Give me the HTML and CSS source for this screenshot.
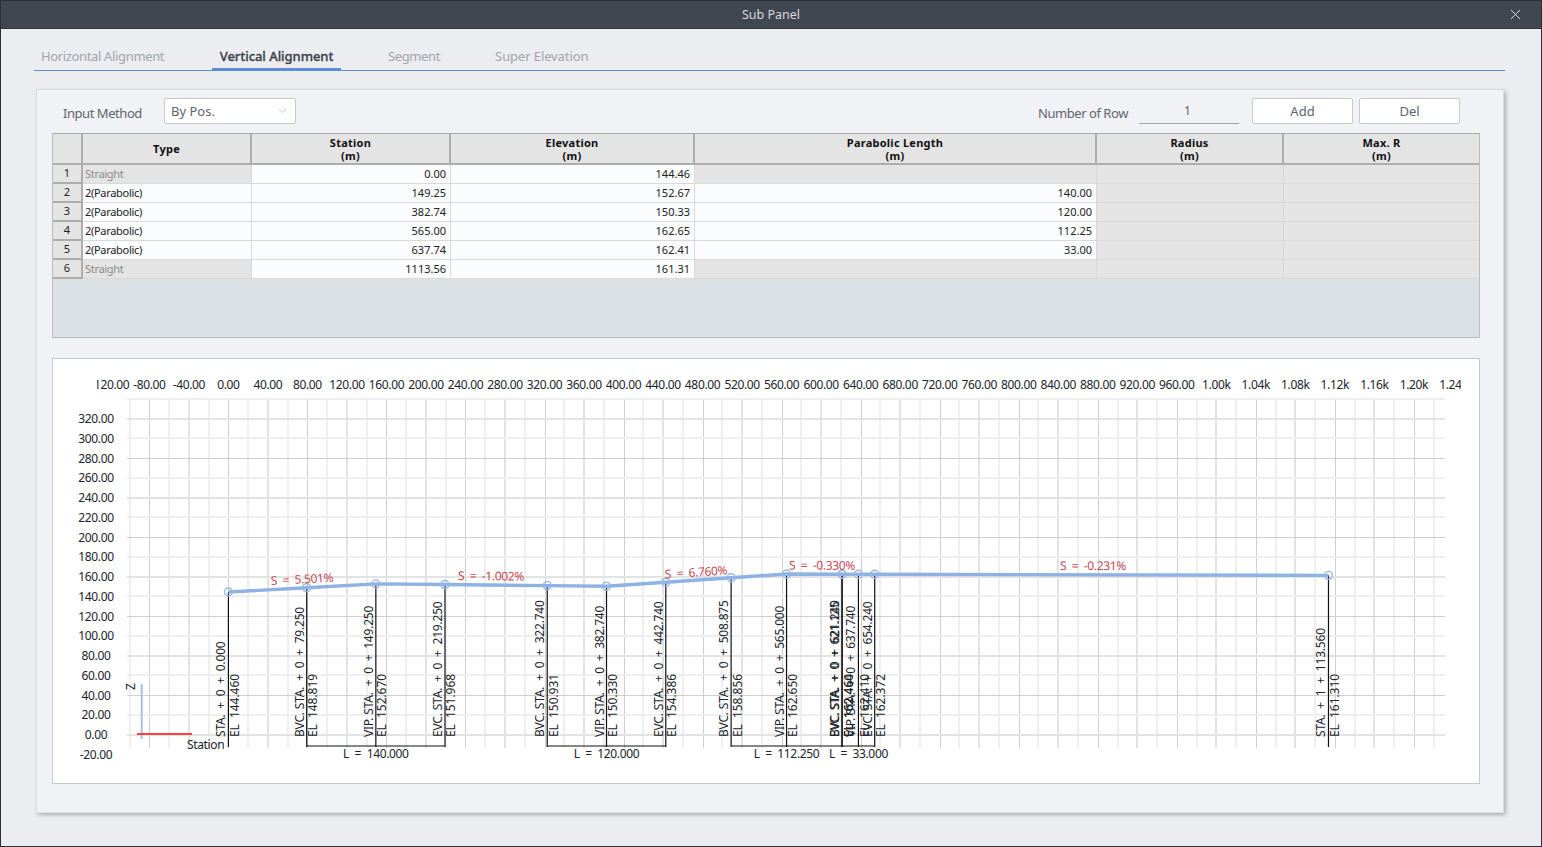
FILE: index.html
```html
<!DOCTYPE html>
<html lang="en">
<head>
<meta charset="UTF-8" />
<meta name="viewport" content="width=device-width, initial-scale=1" />
<title>Sub Panel</title>
<link rel="stylesheet" href="styles.css">
</head>
<body>

<div class="window">
  <div class="titlebar">
    <span>Sub Panel</span>
    <svg class="close" width="11" height="11" viewBox="0 0 11 11"><path d="M1 1l9 9M10 1l-9 9" /></svg>
  </div>

  <div class="tabs">
    <div class="tab">Horizontal Alignment</div>
    <div class="tab active">Vertical Alignment</div>
    <div class="tab">Segment</div>
    <div class="tab">Super Elevation</div>
  </div>

  <div class="card">
    <div class="toolbar">
      <label class="input-label">Input Method</label>
      <div class="select">
        <span>By Pos.</span>
        <svg width="9" height="6" viewBox="0 0 9 6"><path d="M1 1l3.5 3.5L8 1" /></svg>
      </div>
      <div class="toolbar-right">
        <label class="row-label">Number of Row</label>
        <div class="row-input">1</div>
        <button class="add">Add</button>
        <button>Del</button>
      </div>
    </div>

    <div class="grid">
      <table>
        <colgroup>
          <col class="c-num"><col class="c-type"><col class="c-sta"><col class="c-el">
          <col class="c-len"><col class="c-rad"><col class="c-max">
        </colgroup>
        <thead>
          <tr>
            <th></th>
            <th>Type</th>
            <th>Station<br>(m)</th>
            <th>Elevation<br>(m)</th>
            <th>Parabolic Length<br>(m)</th>
            <th>Radius<br>(m)</th>
            <th>Max. R<br>(m)</th>
          </tr>
        </thead>
        <tbody>
          <tr><td class="num">1</td><td class="type off">Straight</td><td>0.00</td><td>144.46</td><td class="off"></td><td class="off"></td><td class="off"></td></tr>
          <tr><td class="num">2</td><td class="type">2(Parabolic)</td><td>149.25</td><td>152.67</td><td>140.00</td><td class="off"></td><td class="off"></td></tr>
          <tr><td class="num">3</td><td class="type">2(Parabolic)</td><td>382.74</td><td>150.33</td><td>120.00</td><td class="off"></td><td class="off"></td></tr>
          <tr><td class="num">4</td><td class="type">2(Parabolic)</td><td>565.00</td><td>162.65</td><td>112.25</td><td class="off"></td><td class="off"></td></tr>
          <tr><td class="num">5</td><td class="type">2(Parabolic)</td><td>637.74</td><td>162.41</td><td>33.00</td><td class="off"></td><td class="off"></td></tr>
          <tr><td class="num">6</td><td class="type off">Straight</td><td>1113.56</td><td>161.31</td><td class="off"></td><td class="off"></td><td class="off"></td></tr>
        </tbody>
      </table>
    </div>

    <div class="chart">
      <svg id="chart" width="1426" height="424" viewBox="53 359 1426 424"></svg>
    </div>
  </div>
</div>

<script src="chart.js"></script>
</body>
</html>
```

FILE: styles.css
```css
* {
  box-sizing: border-box;
}
body {
  margin: 0;
  font-family: "Noto Sans", sans-serif;
  background: #ebedf0;
}
.window {
  width: 1542px;
  height: 847px;
  border: 1px solid #2b3036;
  background: #ebedf0;
  overflow: hidden;
}
.titlebar {
  height: 29px;
  margin: -1px -1px 0;
  background: #414751;
  border-bottom: 1px solid #2f343b;
  color: #d5d8dc;
  font-size: 12.5px;
  display: flex;
  align-items: center;
  justify-content: center;
  position: relative;
}
.close {
  position: absolute;
  right: 21px;
  top: 9px;
}
.close path {
  stroke: #d5d8dc;
  stroke-width: 1;
  fill: none;
}
.tabs {
  display: flex;
  gap: 41px;
  height: 26px;
  margin: 16px 36px 0 33px;
  border-bottom: 1px solid #5b8fd0;
}
.tab {
  padding: 0 7px;
  height: 26px;
  line-height: 22px;
  font-size: 13px;
  letter-spacing: -0.35px;
  color: #a2a5aa;
  white-space: nowrap;
}
.tab:last-child {
  letter-spacing: -0.1px;
}
.tab.active {
  padding: 0 7.5px;
  margin-right: -1px;
  color: #3d434b;
  font-weight: 500;
  letter-spacing: -0.05px;
  border-bottom: 3px solid #5b8fd0;
  -webkit-text-stroke: 0.3px #3d434b;
}
.card {
  width: 1468px;
  height: 724px;
  margin: 18px 0 0 35px;
  padding: 8px 23px 0 15px;
  background: #f0f2f6;
  border: 1px solid #d9dce1;
  box-shadow: 2px 2px 4px rgba(0, 0, 0, 0.25);
}
.toolbar {
  display: flex;
  height: 26px;
  margin-bottom: 9px;
  font-size: 13px;
  color: #5e646c;
}
.input-label {
  margin-left: 11px;
  width: 90px;
  padding-top: 6px;
  white-space: nowrap;
  letter-spacing: -0.45px;
}
.select {
  margin-left: 11px;
  width: 132px;
  height: 26px;
  padding: 0 8px 0 6px;
  background: #fff;
  border: 1px solid #c9c9c9;
  border-radius: 2px;
  display: flex;
  align-items: center;
  justify-content: space-between;
  color: #5e646c;
}
.select path {
  stroke: #d0d0d0;
  fill: none;
}
.toolbar-right {
  margin-left: auto;
  margin-right: 20px;
  display: flex;
}
.row-label {
  width: 101px;
  padding-top: 6px;
  white-space: nowrap;
  letter-spacing: -0.45px;
}
.row-input {
  width: 100px;
  height: 26px;
  line-height: 26px;
  text-align: center;
  font-size: 12px;
  padding-right: 3px;
  border-bottom: 1px solid #9fa3a8;
}
button {
  width: 101px;
  height: 26px;
  margin-left: 6px;
  padding: 0;
  background: #fff;
  border: 1px solid #c9c9c9;
  border-radius: 2px;
  font-family: inherit;
  font-size: 13px;
  color: #5e646c;
}
button.add {
  margin-left: 13px;
}
.grid {
  height: 205px;
  background: #dce1e5;
  border: 1px solid #b7bcc1;
  border-top-color: #a9a9a9;
  margin-bottom: 20px;
}
table {
  width: 1426px;
  table-layout: fixed;
  border-collapse: separate;
  border-spacing: 0;
  font-size: 11px;
  color: #222;
}
.c-num { width: 30px; }
.c-type { width: 169px; }
.c-sta { width: 199px; }
.c-el { width: 244px; }
.c-len { width: 402px; }
.c-rad { width: 187px; }
.c-max { width: 195px; }
th {
  height: 31px;
  padding: 0;
  background: #e4e4e4;
  border-right: 2px solid #adadad;
  border-bottom: 2px solid #adadad;
  font-size: 11px;
  line-height: 13px;
  font-weight: 700;
  color: #111;
  letter-spacing: 0.25px;
}
th:last-child {
  border-right: none;
}
td {
  height: 19px;
  padding: 0 4px 1px 0;
  background: #fbfcfd;
  border-right: 1px solid #d9d9d9;
  border-bottom: 1px solid #d9d9d9;
  text-align: right;
  line-height: 16px;
  overflow: hidden;
}
td:last-child {
  border-right: none;
}
td.off {
  background: #e4e4e4;
  color: #8b8b8b;
}
td.num {
  background: #e4e4e4;
  border-right: 2px solid #adadad;
  border-bottom: 2px solid #adadad;
  text-align: center;
  padding: 0 0 1px;
}
td.type {
  text-align: left;
  padding: 0 0 1px 2px;
  letter-spacing: -0.3px;
}
.chart {
  width: 1428px;
  height: 426px;
  background: #fff;
  border: 1px solid #c3c9ce;
}
.chart svg {
  display: block;
}
.chart text {
  font-family: "Noto Sans", sans-serif;
  font-size: 12px;
  letter-spacing: -0.35px;
  fill: #20242a;
  white-space: pre;
}
.chart .middle {
  text-anchor: middle;
}
.chart .sta {
  letter-spacing: -0.2px;
}
.chart .el {
  letter-spacing: -0.05px;
}
.chart .slope {
  fill: #c44a55;
}
```

FILE: chart.js
```js
const svg = document.getElementById('chart');
const NS = 'http://www.w3.org/2000/svg';

const SCALE = 0.9879;
const X0 = 228.4;
const Y0 = 734.7;
const LEFT = 127;
const RIGHT = 1445;
const TOP = 399;
const BOTTOM = 748;

function sx(v) { return X0 + v * SCALE; }
function sy(v) { return Y0 - v * SCALE; }

function add(tag, attrs, text, parent) {
  const el = document.createElementNS(NS, tag);
  for (const key in attrs) el.setAttribute(key, attrs[key]);
  if (text) el.textContent = text;
  (parent || svg).appendChild(el);
  return el;
}

function line(x1, y1, x2, y2, stroke, width, extra) {
  add('line', Object.assign({ x1, y1, x2, y2, stroke, 'stroke-width': width }, extra));
}

// grid: every 20 units, three line weights
function gridStyle(v) {
  if (v % 80 === 0) return ['#cfcfcf', 1];
  if (v % 40 === 0) return ['#e3e3e3', 2];
  return ['#efefef', 2];
}

for (let v = -100; v <= 1220; v += 20) {
  const [color, width] = gridStyle(v);
  const x = Math.round(sx(v)) + (width === 1 ? 0.5 : 0);
  line(x, TOP, x, BOTTOM, color, width, { 'shape-rendering': 'crispEdges' });
}
for (let v = 0; v <= 340; v += 20) {
  const style = v % 80 === 0 ? ['#e3e3e3', 2] : v % 40 === 0 ? ['#cfcfcf', 1] : ['#efefef', 2];
  const y = Math.round(sy(v)) + (style[1] === 1 ? 0.5 : 0);
  line(LEFT, y, RIGHT, y, style[0], style[1], { 'shape-rendering': 'crispEdges' });
}

// axis labels
const defs = add('defs', {});
const clip = add('clipPath', { id: 'top-clip' }, null, defs);
add('rect', { x: 97, y: 370, width: 1364, height: 30 }, null, clip);
const topAxis = add('g', { 'clip-path': 'url(#top-clip)' });

for (let v = -120; v <= 1240; v += 40) {
  const label = v < 1000 ? v.toFixed(2) : (v / 1000).toFixed(2) + 'k';
  add('text', { x: sx(v), y: 389, class: 'middle' }, label, topAxis);
}
for (let v = -20; v <= 320; v += 20) {
  add('text', { x: 96, y: sy(v) + 4.5, class: 'middle' }, v.toFixed(2));
}

// axis marker
line(141.7, 684, 141.7, 739, '#a6c0e2', 2);
line(137, 734, 192, 734, '#ff4040', 2);
add('text', { x: 135, y: 690, transform: 'rotate(-90 135 690)', fill: '#4a2a6a' }, 'Z');
add('text', { x: 187, y: 749 }, 'Station');

// survey points: station, elevation, labels drawn beside the drop line
const nodes = [
  [0, 144.46, 'STA.  +  0  +  0.000', 'EL  144.460'],
  [79.25, 148.819, 'BVC. STA.  +  0  +  79.250', 'EL  148.819'],
  [149.25, 152.67, 'VIP. STA.  +  0  +  149.250', 'EL  152.670'],
  [219.25, 151.968, 'EVC. STA.  +  0  +  219.250', 'EL  151.968'],
  [322.74, 150.931, 'BVC. STA.  +  0  +  322.740', 'EL  150.931'],
  [382.74, 150.33, 'VIP. STA.  +  0  +  382.740', 'EL  150.330'],
  [442.74, 154.386, 'EVC. STA.  +  0  +  442.740', 'EL  154.386'],
  [508.875, 158.856, 'BVC. STA.  +  0  +  508.875', 'EL  158.856'],
  [565, 162.65, 'VIP. STA.  +  0  +  565.000', 'EL  162.650'],
  [621.125, 162.464, 'EVC. STA.  +  0  +  621.125', 'EL  162.464'],
  [621.24, 162.46, 'BVC. STA.  +  0  +  621.240', 'EL  162.460'],
  [637.74, 162.41, 'VIP. STA.  +  0  +  637.740', 'EL  162.410'],
  [654.24, 162.372, 'EVC. STA.  +  0  +  654.240', 'EL  162.372'],
  [1113.56, 161.31, 'STA.  +  1  +  113.560', 'EL  161.310']
];

const BASE = 746;

// bottom brackets
[[79.25, 219.25], [322.74, 442.74], [508.875, 654.24]].forEach(([a, b]) => {
  line(sx(a), BASE, sx(b), BASE, '#111', 1.2);
});

nodes.forEach(([sta, el, staText, elText]) => {
  const x = sx(sta);
  line(x, sy(el), x, BASE + 1, '#111', 1.2);
  add('text', { x: x - 3, y: 737, class: 'sta', transform: `rotate(-90 ${x - 3} 737)` }, staText);
  add('text', { x: x + 10.5, y: 737, class: 'el', transform: `rotate(-90 ${x + 10.5} 737)` }, elText);
});

[[149.25, 'L  =  140.000'], [382.74, 'L  =  120.000'], [565, 'L  =  112.250'], [637.74, 'L  =  33.000']].forEach(([sta, label]) => {
  add('text', { x: sx(sta), y: 758, class: 'middle' }, label);
});

// profile line and point markers
const points = nodes.map(([sta, el]) => `${sx(sta)},${sy(el)}`).join(' ');
add('polyline', { points, fill: 'none', stroke: '#8fb2e4', 'stroke-width': 3.4 });
nodes.forEach(([sta, el]) => {
  add('circle', { cx: sx(sta), cy: sy(el), r: 4, fill: 'none', stroke: '#97b7e6', 'stroke-width': 1.4 });
});

// grade labels
[
  [271, 585, -3, 'S  =  5.501%'],
  [458, 580, 0.5, 'S  =  -1.002%'],
  [665, 578.5, -3.7, 'S  =  6.760%'],
  [789, 569.5, 0.2, 'S  =  -0.330%'],
  [1060, 570, 0.1, 'S  =  -0.231%']
].forEach(([x, y, angle, label]) => {
  add('text', { x, y, class: 'slope', transform: `rotate(${angle} ${x} ${y})` }, label);
});
```
